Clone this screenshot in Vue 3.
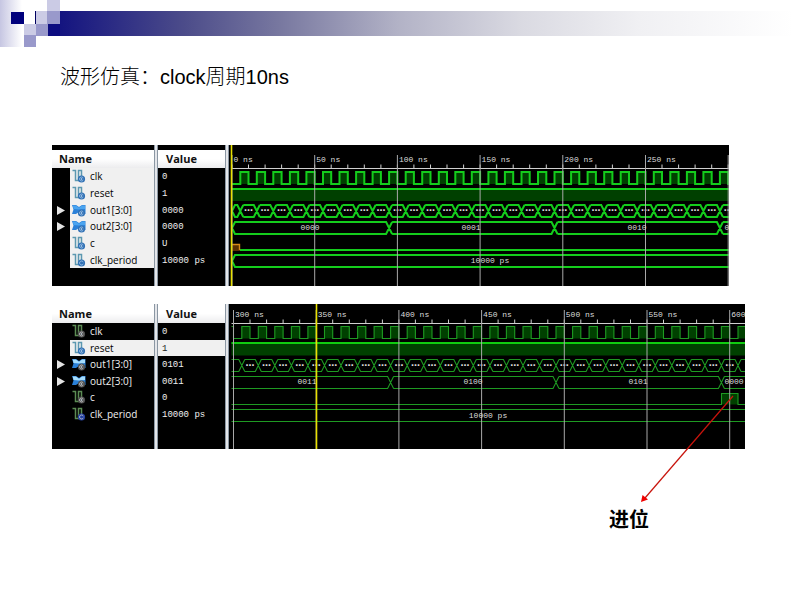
<script setup>
const steps = (from, to, by) => {
  const out = []
  for (let t = from; t <= to; t += by) out.push(t)
  return out
}

/* Builds every trace of one viewer window from its time origin and row heights. */
function buildWave(o) {
  const x = (t) => Math.round((o.x0 + (t - o.start) * 1.654) * 10) / 10
  const end = o.start + 1500

  const clock = (() => {
    let line = o.start === 0 ? `M${o.left} ${o.clk[1]}` : `M${o.left} ${o.clk[0]}H${x(o.start)}V${o.clk[1]}`
    let fill = ''
    for (const t of steps(o.start + 5, end, 10)) {
      line += `H${x(t)}V${o.clk[0]}H${x(t + 5)}V${o.clk[1]}`
      fill += `M${x(t)} ${o.clk[1]}V${o.clk[0]}H${x(t + 5)}V${o.clk[1]}Z`
    }
    return { line, fill }
  })()

  const bus = (edges, [top, bottom], closed) => {
    const mid = (top + bottom) / 2
    const s = 3
    let d = closed
      ? `M${o.left} ${mid}L${o.left + s} ${top}`
      : `M${o.left} ${top}`
    let low = closed
      ? `M${o.left} ${mid}L${o.left + s} ${bottom}`
      : `M${o.left} ${bottom}`
    for (const t of edges) {
      const e = x(t)
      d += `H${e - s}L${e + s} ${bottom}M${e + s} ${top}`
      low += `H${e - s}L${e + s} ${top}M${e + s} ${bottom}`
    }
    return `${d}H3000${low}H3000`
  }

  const edges = steps(o.start + 5, end, 10)
  const last = o.start + 300
  return {
    ...o,
    clock,
    out1: bus(edges, o.bus1, o.start === 0),
    out2: bus(o.changes, o.bus2, o.start === 0),
    period: bus([], o.per, o.start === 0),
    dots: steps(o.start + 10, last, 10).map((t) => x(t)),
    majors: steps(o.start, last, 50).map((t) => ({ t, x: x(t), label: t < last || o.labelLast })),
    ticks: steps(o.start, end, 10).map((t) => `M${x(t)} ${o.axis - 4}V${o.axis}`).join(''),
  }
}

const panels = [
  {
    id: 'first',
    rows: [
      { name: 'clk', value: '0' },
      { name: 'reset', value: '1' },
      { name: 'out1[3:0]', value: '0000', bus: true },
      { name: 'out2[3:0]', value: '0000', bus: true },
      { name: 'c', value: 'U' },
      { name: 'clk_period', value: '10000 ps', constant: true },
    ],
    wave: buildWave({
      start: 0, x0: 3, left: 3, height: 141, axis: 23.5, majorTop: 10, label: 17,
      clk: [27, 39], reset: [44, 56], bus1: [60, 72], bus2: [77, 89],
      cLine: 'M11 105H3000', cFill: '', per: [110, 122], changes: [95, 195, 295],
      texts: [
        { x: 81, y: 85, s: '0000' }, { x: 242, y: 85, s: '0001' },
        { x: 408, y: 85, s: '0010' }, { x: 505, y: 85, s: '0011' },
        { x: 261, y: 118, s: '10000 ps' },
      ],
      dotY: 66, cursor: 2.5,
    }),
  },
  {
    id: 'second',
    rows: [
      { name: 'clk', value: '0' },
      { name: 'reset', value: '1', selected: true },
      { name: 'out1[3:0]', value: '0101', bus: true },
      { name: 'out2[3:0]', value: '0011', bus: true },
      { name: 'c', value: '0' },
      { name: 'clk_period', value: '10000 ps', constant: true },
    ],
    wave: buildWave({
      start: 300, x0: 4.5, left: 2.5, height: 145, axis: 19.5, majorTop: 6, label: 13, labelLast: true,
      clk: [22.5, 34.5], reset: [39, 51.5], bus1: [55.5, 67.5], bus2: [72.5, 84.5],
      cLine: 'M2.5 100.5H492.5V89.5H509V100.5H3000', cFill: 'M492.5 100.5V89.5H509V100.5Z',
      per: [105.5, 117.5], changes: [395, 495, 595],
      texts: [
        { x: 78, y: 80, s: '0011' }, { x: 244, y: 80, s: '0100' },
        { x: 409, y: 80, s: '0101' }, { x: 505, y: 80, s: '0000' },
        { x: 259, y: 114, s: '10000 ps' },
      ],
      dotY: 61.5, cursor: 87.5,
    }),
  },
]
</script>

<template>
  <main class="slide">
    <header class="banner" aria-hidden="true">
      <svg class="squares" width="60" height="47" shape-rendering="crispEdges">
        <defs>
          <linearGradient id="fade"><stop offset="0" stop-color="#c6c6e2" /><stop offset="1" stop-color="#fff" /></linearGradient>
        </defs>
        <rect width="22" height="47" fill="url(#fade)" />
        <rect x="11" y="12" width="13" height="12" fill="#00007c" />
        <rect x="35" y="11" width="1" height="13" fill="#000060" />
        <rect x="48" y="24" width="12" height="12" fill="#0c0c80" />
        <rect x="47" width="13" height="11" fill="#cbcbe5" />
        <rect x="47" y="11" width="13" height="13" fill="#9999cb" />
        <rect x="36" y="11" width="11" height="13" fill="#cbcbe5" />
        <rect x="24" y="24" width="12" height="11" fill="#cbcbe5" />
        <rect x="36" y="24" width="12" height="12" fill="#9999cb" />
        <rect x="24" y="35" width="12" height="12" fill="#9999cb" />
      </svg>
      <div class="bar"></div>
    </header>

    <h1>波形仿真：clock周期10ns</h1>

    <section v-for="p in panels" :key="p.id" class="viewer" :class="p.id">
      <div class="signals">
        <table>
          <thead>
            <tr><th scope="col">Name</th><th scope="col">Value</th></tr>
          </thead>
          <tbody>
            <tr v-for="r in p.rows" :key="r.name" :class="{ selected: r.selected }">
              <td class="name">
                <div class="entry">
                  <span class="gutter">
                    <button v-if="r.bus" type="button" :aria-label="'Expand ' + r.name">
                      <svg width="8" height="10"><path d="M0 1L8 5.5L0 10Z" fill="#e4e4e4" /></svg>
                    </button>
                  </span>
                  <span class="label">
                    <svg class="icon" width="14" height="14" viewBox="0 0 14 14" aria-hidden="true">
                      <template v-if="r.bus">
                        <path class="busbody" d="M0 2H4L7 4L10 2H13.5V11H10L7 9L4 11H0L1.5 6.5Z" />
                        <path d="M0.7 2.6H4L7 4.8L10 2.6H13V6L7 6.5L1.5 6Z" class="busshine" />
                      </template>
                      <path v-else class="pulse" d="M0.5 1.5H3.5V11.5H6.5V1.5H9.5V8" />
                      <circle class="badge" :class="{ constant: r.constant }" cx="9.5" cy="10" r="3.6" />
                      <path class="ring" d="M11.3 9A2 2 0 1 0 11.3 11" />
                      <circle v-if="!r.constant" class="pin" cx="9.5" cy="10" r="0.8" />
                    </svg>
                    <span>{{ r.name }}</span>
                  </span>
                </div>
              </td>
              <td class="value">{{ r.value }}</td>
            </tr>
          </tbody>
        </table>
      </div>

      <svg class="wave" width="100%" :height="p.wave.height">
        <rect class="shade" :x="p.wave.left" :y="p.wave.reset[0]" width="3000" :height="p.wave.reset[1] - p.wave.reset[0]" />
        <path class="shade" :d="p.wave.clock.fill + p.wave.cFill" />
        <path class="trace" :d="p.wave.clock.line" />
        <path class="trace high" :d="`M${p.wave.left} ${p.wave.reset[0]}H3000`" />
        <path class="trace" :d="p.wave.out1" />
        <path class="trace" :d="p.wave.out2" />
        <path class="trace" :d="p.wave.cLine" />
        <path class="trace" :d="p.wave.period" />
        <template v-if="p.id === 'first'">
          <rect class="unknown-fill" x="3" y="99" width="8" height="7" />
          <path class="unknown" d="M3 99.5H10.5V105" />
        </template>
        <text v-for="d in p.wave.dots" :key="d" class="dots" :x="d" :y="p.wave.dotY">…</text>
        <path class="axis" :d="`M${p.wave.left} ${p.wave.axis}H3000${p.wave.ticks}`" />
        <g v-for="m in p.wave.majors" :key="m.t">
          <path class="major" :d="`M${m.x} ${p.wave.majorTop}V${p.wave.height}`" />
          <text v-if="m.label" class="time" :x="m.x + 1.5" :y="p.wave.label">{{ m.t }} ns</text>
        </g>
        <text v-for="t in p.wave.texts" :key="t.x" class="data" :x="t.x" :y="t.y">{{ t.s }}</text>
        <path class="cursor" :d="`M${p.wave.cursor} 0V${p.wave.height}`" />
      </svg>
      <figure v-if="p.id === 'second'" class="callout">
        <svg width="98" height="112" aria-hidden="true">
          <path d="M93 5L5 107" stroke="#c8140c" stroke-width="1.2" />
          <path d="M1 111L2.5 104L8 108.5Z" fill="#f00000" />
        </svg>
        <figcaption>进位</figcaption>
      </figure>
    </section>
  </main>
</template>

<style>
body {
  margin: 0;
  background: #fff;
}
</style>

<style scoped>
.slide {
  min-height: 100vh;
  font-family: "Liberation Sans", "Noto Sans CJK SC", sans-serif;
  color: #000;
}
.banner {
  display: flex;
  align-items: flex-start;
}
.squares {
  flex: none;
}
.bar {
  flex: 1;
  height: 25px;
  margin-top: 11px;
  background: linear-gradient(to right, #141480, #4c4c8a 17%, #7878a0 30%, #b2b2c6 46%, #dadae2 63%, #f0f0f3 79%, #fff);
}
h1 {
  margin: 15px 0 53px 60px;
  font-size: 20px;
  line-height: 30px;
  font-weight: 300;
}
.viewer {
  position: relative;
  display: flex;
  margin-left: 52px;
  background: #000;
}
.first {
  margin-right: 64px;
  margin-bottom: 18px;
}
.second {
  margin-right: 48px;
}
.signals {
  flex: none;
  width: 177px;
  background: linear-gradient(to right,
    #000 102px, #8b97a3 102px, #8b97a3 103px, #e4e6ea 103px, #e4e6ea 105px, #8b97a3 105px, #8b97a3 106px,
    #000 106px, #000 173px, #8b97a3 173px, #8b97a3 174px, #e4e6ea 174px, #e4e6ea 176px, #8b97a3 176px);
}
.first .signals {
  padding-top: 5px;
}
table {
  width: 177px;
  height: 118px;
  table-layout: fixed;
  border-spacing: 0;
}
th,
td {
  padding: 0;
  border-right: 4px solid transparent;
  background-clip: padding-box;
  text-align: left;
}
th {
  height: 18px;
  padding-left: 7px;
  font: bold 11px/18px "Open Sans", "Noto Sans", sans-serif;
  color: #111;
  background-image: linear-gradient(#fff 50%, #ececee);
}
th:first-child {
  width: 95px;
}
th:last-child {
  padding-left: 8px;
}
.second th {
  height: 19px;
  line-height: 19px;
}
td {
  height: 16px;
  color: #f0f0f0;
}
.entry {
  display: flex;
  height: 100%;
  font: 10px/16px "Open Sans", "Noto Sans", sans-serif;
}
.gutter {
  display: flex;
  flex: none;
  align-items: center;
  width: 18px;
  padding-left: 5px;
  box-sizing: border-box;
}
button {
  display: flex;
  padding: 0;
  border: 0;
  background: none;
}
.label {
  display: flex;
  flex: 1;
  align-items: center;
  gap: 4px;
  padding-left: 2px;
}
.icon {
  flex: none;
}
.first .name,
.selected .name {
  color: #000;
  background-image: linear-gradient(to right, #000 18px, #f0f0f0 18px);
}
.selected .value {
  color: #222;
  background-color: #f0f0f0;
}
.value {
  height: 14px;
  padding-top: 2px;
  padding-left: 4px;
  font: 9px/14px "Liberation Mono", monospace;
}
.pulse {
  fill: none;
  stroke: #5c98b0;
  stroke-width: 1.5;
}
.busbody {
  fill: #2a80d8;
}
.busshine {
  fill: #4aa4f0;
}
.badge {
  fill: #3070b4;
}
.ring {
  fill: none;
  stroke: #a0c4e8;
  stroke-width: 0.8;
}
.pin {
  fill: #d8e8f8;
}
.second tr:not(.selected) .pulse {
  stroke: #5c8c54;
}
.second tr:not(.selected) .badge {
  fill: #505050;
}
.second tr:not(.selected) .ring {
  stroke: #c8c8c8;
}
.second tr:not(.selected) .badge.constant {
  fill: #2440a0;
}
.second .busshine {
  fill: #a4dcfc;
}
.wave {
  display: block;
  flex: 1;
  min-width: 0;
}
.shade {
  fill: #004000;
}
.trace {
  fill: none;
  stroke: #14cc1c;
  stroke-width: 2;
}
.second .trace {
  stroke: #1e9a22;
  stroke-width: 1.1;
}
.second .trace.high {
  stroke: #10cc10;
  stroke-width: 2;
}
.unknown-fill {
  fill: #5a3000;
}
.unknown {
  fill: none;
  stroke: #d88a18;
  stroke-width: 1.4;
}
.axis {
  fill: none;
  stroke: #d0d0d0;
  stroke-width: 1;
}
.major {
  stroke: #a8a8a8;
  stroke-width: 1;
}
.cursor {
  stroke: #e8e000;
  stroke-width: 1.6;
}
text {
  font: 8px "Liberation Mono", monospace;
  fill: #dcdcdc;
}
.data {
  text-anchor: middle;
}
.dots {
  font: bold 9px "DejaVu Sans", sans-serif;
  text-anchor: middle;
  fill: #d8d8d8;
}
.callout {
  position: absolute;
  top: 87px;
  left: 588px;
  margin: 0;
}
.callout svg {
  display: block;
}
figcaption {
  margin: 2px 0 0 -31px;
  font-size: 20px;
  line-height: 30px;
  font-weight: bold;
}
</style>
